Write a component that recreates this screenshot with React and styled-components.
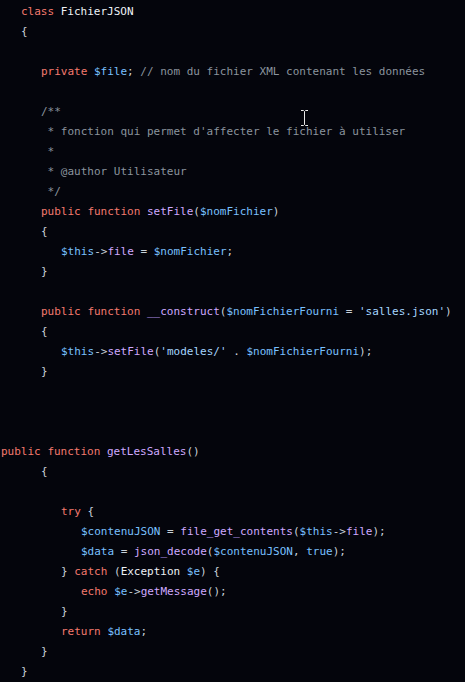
import React from "react";
import styled, { createGlobalStyle } from "styled-components";

const GlobalStyle = createGlobalStyle`
  html, body {
    margin: 0;
    padding: 0;
    background-color: #04050c;
  }
`;

const Page = styled.div`
  position: relative;
  width: 465px;
  height: 682px;
  overflow: hidden;
  background-color: #04050c;
`;

const Code = styled.pre`
  margin: 0;
  padding: 2px 0 0 1px;
  font-family: "DejaVu Sans Mono", "Liberation Mono", monospace;
  font-size: 11px;
  line-height: 20px;
  color: #c9d1d9;
  white-space: pre;
`;

const Line = styled.div`
  height: 20px;
  padding-left: ${(props) => (props.indent || 0) * 20}px;
`;

const Kw = styled.span`
  color: #f47a6e;
`;

const Var = styled.span`
  color: #79c0ff;
`;

const Fn = styled.span`
  color: #cfa9ff;
`;

const Str = styled.span`
  color: #a5d6ff;
`;

const Cm = styled.span`
  color: #8b949e;
`;

const Cls = styled.span`
  color: #eef2f7;
`;

const Cursor = styled.svg`
  position: absolute;
  left: 300px;
  top: 110px;
`;

const App = () => {
  return (
    <Page>
      <GlobalStyle />
      <Code>
        <Line indent={1}>
          <Kw>class</Kw> <Cls>FichierJSON</Cls>
        </Line>
        <Line indent={1}>{"{"}</Line>
        <Line />
        <Line indent={2}>
          <Kw>private</Kw> <Var>$file</Var>; <Cm>// nom du fichier XML contenant les données</Cm>
        </Line>
        <Line />
        <Line indent={2}>
          <Cm>/**</Cm>
        </Line>
        <Line indent={2}>
          <Cm> * fonction qui permet d'affecter le fichier à utiliser</Cm>
        </Line>
        <Line indent={2}>
          <Cm> *</Cm>
        </Line>
        <Line indent={2}>
          <Cm> * @author Utilisateur</Cm>
        </Line>
        <Line indent={2}>
          <Cm> */</Cm>
        </Line>
        <Line indent={2}>
          <Kw>public</Kw> <Kw>function</Kw> <Fn>setFile</Fn>(<Var>$nomFichier</Var>)
        </Line>
        <Line indent={2}>{"{"}</Line>
        <Line indent={3}>
          <Var>$this</Var>-&gt;<Fn>file</Fn> = <Var>$nomFichier</Var>;
        </Line>
        <Line indent={2}>{"}"}</Line>
        <Line />
        <Line indent={2}>
          <Kw>public</Kw> <Kw>function</Kw> <Fn>__construct</Fn>(
          <Var>$nomFichierFourni</Var> = <Str>'salles.json'</Str>)
        </Line>
        <Line indent={2}>{"{"}</Line>
        <Line indent={3}>
          <Var>$this</Var>-&gt;<Fn>setFile</Fn>(<Str>'modeles/'</Str> .{" "}
          <Var>$nomFichierFourni</Var>);
        </Line>
        <Line indent={2}>{"}"}</Line>
        <Line />
        <Line />
        <Line />
        <Line indent={0}>
          <Kw>public</Kw> <Kw>function</Kw> <Fn>getLesSalles</Fn>()
        </Line>
        <Line indent={2}>{"{"}</Line>
        <Line />
        <Line indent={3}>
          <Kw>try</Kw> {"{"}
        </Line>
        <Line indent={4}>
          <Var>$contenuJSON</Var> = <Fn>file_get_contents</Fn>(<Var>$this</Var>-&gt;
          <Fn>file</Fn>);
        </Line>
        <Line indent={4}>
          <Var>$data</Var> = <Fn>json_decode</Fn>(<Var>$contenuJSON</Var>,{" "}
          <Var>true</Var>);
        </Line>
        <Line indent={3}>
          {"} "}
          <Kw>catch</Kw> (<Cls>Exception</Cls> <Var>$e</Var>) {"{"}
        </Line>
        <Line indent={4}>
          <Kw>echo</Kw> <Var>$e</Var>-&gt;<Fn>getMessage</Fn>();
        </Line>
        <Line indent={3}>{"}"}</Line>
        <Line indent={3}>
          <Kw>return</Kw> <Var>$data</Var>;
        </Line>
        <Line indent={2}>{"}"}</Line>
        <Line indent={1}>{"}"}</Line>
      </Code>
      <Cursor width="9" height="16" viewBox="0 0 9 16">
        <path
          d="M1 0.5 H3.5 L4.5 1.5 L5.5 0.5 H8 M4.5 1.5 V14.5 M1 15.5 H3.5 L4.5 14.5 L5.5 15.5 H8"
          fill="none"
          stroke="#e8e8e8"
          strokeWidth="1"
        />
      </Cursor>
    </Page>
  );
};

export default App;
